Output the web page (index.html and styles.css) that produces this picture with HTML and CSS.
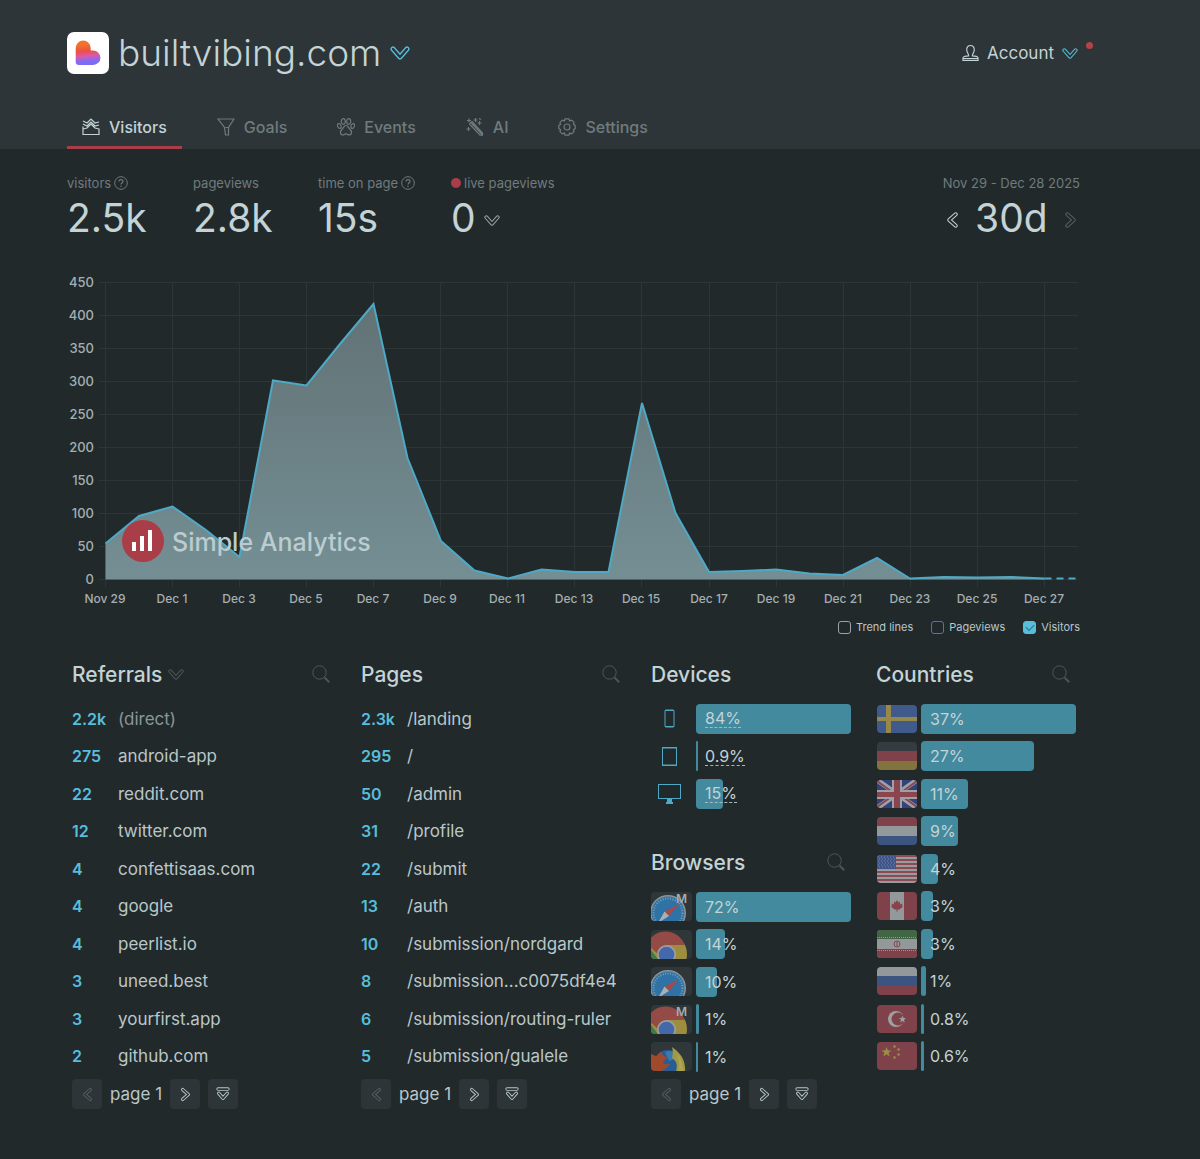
FILE: index.html
```html
<!doctype html>
<html lang="en">
<head>
    <meta charset="UTF-8">
    <meta name="viewport" content="width=device-width, initial-scale=1.0">
    <title>builtvibing.com - Simple Analytics</title>
    <link rel="stylesheet" href="styles.css">
</head>
<body>
    <!-- shared icons -->
    <svg class="sprite" aria-hidden="true">
        <defs>
            <symbol id="down" viewBox="0 0 20 16">
                <path class="outer" d="M3 4l7 8 7-8"/>
                <path class="inner" d="M3 4l7 8 7-8"/>
            </symbol>
            <symbol id="left" viewBox="0 0 16 20">
                <path class="outer" d="M12 3l-8 7 8 7"/>
                <path class="inner" d="M12 3l-8 7 8 7"/>
            </symbol>
            <symbol id="right" viewBox="0 0 16 20">
                <path class="outer" d="M4 3l8 7-8 7"/>
                <path class="inner" d="M4 3l8 7-8 7"/>
            </symbol>
            <symbol id="last" viewBox="0 0 20 20">
                <path class="outer" d="M4 9l6 7 6-7M3 3h14"/>
                <path class="inner" d="M4 9l6 7 6-7M3 3h14"/>
            </symbol>
            <symbol id="search" viewBox="0 0 18 18">
                <circle cx="7.5" cy="7.5" r="6.7" fill="none" stroke="currentColor"/>
                <path d="M12.5 12.5l4.7 4.7" fill="none" stroke="currentColor" stroke-width="2"/>
            </symbol>
            <symbol id="help" viewBox="0 0 14 14">
                <circle cx="7" cy="7" r="6.3" fill="none" stroke="currentColor"/>
                <path d="M5 5.6c0-2.6 4-2.6 4-.2C9 7 7 6.9 7 8.5M7 9.7v1.2" fill="none" stroke="currentColor" stroke-width="1.2"/>
            </symbol>
            <symbol id="safari" viewBox="0 0 41 29">
                <circle cx="17" cy="21" r="18" fill="#8c9496"/>
                <circle cx="17" cy="21" r="16.5" fill="#2f72a5"/>
                <circle cx="17" cy="21" r="14.5" fill="none" stroke="#7b9db4" stroke-width="2" stroke-dasharray="1 1.5"/>
                <path d="M28 12L13.5 19.5l4.5 4.5z" fill="#a44a4b"/>
                <path d="M7 31l6.5-11.5 4.5 4.5z" fill="#a9b0b1"/>
            </symbol>
            <symbol id="chrome" viewBox="0 0 41 29">
                <circle cx="16" cy="24" r="20" fill="#9d8e3f"/>
                <path d="M-4 14a20 20 0 0 1 37.500 1H16L7 24z" fill="#944a45"/>
                <path d="M-3 16L9 32H-4z" fill="#3b7a4b"/>
                <circle cx="15.5" cy="24.5" r="9.5" fill="#9a9f9f"/>
                <circle cx="15.5" cy="24.5" r="7.8" fill="#4468aa"/>
            </symbol>
            <symbol id="firefox" viewBox="0 0 41 29">
                <circle cx="17" cy="23" r="15" fill="#285c94"/>
                <path d="M14 10c6-3 11 1 12 6l-8 3z" fill="#3979ab"/>
                <path d="M21 5c9 6 14 14 13 25h-9c2-9 0-11-4-14 1-4 1-7 0-11z" fill="#a19a43"/>
                <path d="M26 12c5 5 6 12 6 18h-5c2-8 1-12-1-18z" fill="#a9a553"/>
                <path d="M0 12c3 1 4 2 6 2 1-2 3-4 5-4 0 3 1 4 5 5-1 3-4 4-4 6 2 2 5 1 7 1-2 4-6 5-8 7H0z" fill="#a04a2d"/>
            </symbol>
        </defs>
    </svg>

    <header class="header">
        <div class="top">
            <button class="site">
                <svg class="logo" viewBox="0 0 42 42">
                    <defs>
                        <linearGradient id="heart" x1="0.4" y1="0" x2="0.5" y2="1">
                            <stop offset="0.15" stop-color="#f3732a"/>
                            <stop offset="0.42" stop-color="#ec5044"/>
                            <stop offset="0.64" stop-color="#d75ab0"/>
                            <stop offset="0.85" stop-color="#7d6cf5"/>
                        </linearGradient>
                    </defs>
                    <rect width="42" height="42" rx="7" fill="#fff"/>
                    <path fill="url(#heart)" d="M8.7 16a7.5 7.5 0 0 1 15 0v2.5h2.5a7.2 7.2 0 0 1 0 14.500H12a3.3 3.3 0 0 1-3.3-3.3z"/>
                </svg>
                <span class="site-name">builtvibing.com</span>
                <svg class="icon-down blue"><use href="#down"/></svg>
            </button>
            <button class="account">
                <svg class="user" viewBox="0 0 18 18">
                    <path d="M9 1C6.5 1 5 3 5 5.5c0 3 2 4 2 6.5-4 0-6 1-6 2.5V17h16v-2.5C17 13 15 12 11 12c0-2.5 2-3.5 2-6.5C13 3 11.5 1 9 1zM1 15h16"/>
                </svg>
                Account
                <svg class="icon-down small blue"><use href="#down"/></svg>
                <span class="badge"></span>
            </button>
        </div>
        <nav class="tabs">
            <a href="#" class="tab active">
                <svg class="tab-icon" viewBox="0 0 18 18"><path d="M1 8.500v8h16v-6M1 3l4 2 4-4 4 4 4-1M1 6l4 2 4-4 4 4 4-1M1 11l4-1 4-4 4 4 4 1"/></svg>
                Visitors
            </a>
            <a href="#" class="tab">
                <svg class="tab-icon" viewBox="0 0 18 18"><path d="M1 1h16l-5.500 8.500V17h-3l-1-7.500zM8.500 9.500h3"/></svg>
                Goals
            </a>
            <a href="#" class="tab">
                <svg class="tab-icon" viewBox="0 0 18 18">
                    <ellipse cx="6.3" cy="3.5" rx="2" ry="2.8"/>
                    <ellipse cx="11.7" cy="3.5" rx="2" ry="2.8"/>
                    <ellipse cx="2.3" cy="8" rx="1.7" ry="2.5" transform="rotate(-20 2.3 8)"/>
                    <ellipse cx="15.7" cy="8" rx="1.7" ry="2.5" transform="rotate(20 15.7 8)"/>
                    <path d="M9 7.5c-2 0-2 2-3.500 3.200C4 12 3 13 3.500 15c.5 2 2.500 2.500 3.800 1.500 1-.7 2.400-.7 3.400 0 1.300 1 3.300.5 3.800-1.500.5-2-.5-3-2-4.300C11 9.500 11 7.500 9 7.500z"/>
                </svg>
                Events
            </a>
            <a href="#" class="tab">
                <svg class="tab-icon" viewBox="0 0 18 18">
                    <path d="M5 4.5L16.500 17M3.500 6L14 17.200h2.500V15L6 3.500M3.500 6L6 3.500M6.500 7.500l2-1.500"/>
                    <path d="M3 .5v4M1 2.500h4M9.500 0v4M7.500 2h4M13.500 3v4M11.500 5h4M2.500 9v4M.5 11h4M13 .5l2 1"/>
                </svg>
                AI
            </a>
            <a href="#" class="tab">
                <svg class="tab-icon" viewBox="0 0 18 18">
                    <circle cx="9" cy="9" r="3"/>
                    <path d="M7 .8h4l.6 2.100 2.100-.8 2.300 2.300-.5 2.100 1.700.9v3.200l-1.700.9.5 2.100-2.300 2.300-2.100-.8-.6 2.100H7l-.6-2.100-2.100.8L2 13.600l.5-2.100-1.700-.9V7.400l1.700-.9L2 4.400l2.300-2.300 2.100.8z"/>
                </svg>
                Settings
            </a>
        </nav>
    </header>

    <main class="content">
        <section class="stats">
            <div class="stat">
                <div class="label">visitors <svg class="help"><use href="#help"/></svg></div>
                <div class="value">2.5k</div>
            </div>
            <div class="stat">
                <div class="label">pageviews</div>
                <div class="value">2.8k</div>
            </div>
            <div class="stat">
                <div class="label">time on page <svg class="help"><use href="#help"/></svg></div>
                <div class="value">15s</div>
            </div>
            <div class="stat">
                <div class="label"><span class="live-dot"></span>live pageviews</div>
                <div class="value">0 <svg class="icon-down small"><use href="#down"/></svg></div>
            </div>
            <div class="stat period">
                <div class="label">Nov 29 - Dec 28 2025</div>
                <div class="value">
                    <button aria-label="Previous period"><svg class="arrow"><use href="#left"/></svg></button>
                    30d
                    <button class="dim" aria-label="Next period"><svg class="arrow"><use href="#right"/></svg></button>
                </div>
            </div>
        </section>

        <svg class="chart" viewBox="0 0 1013 340">
            <defs>
                <linearGradient id="area" x1="0" y1="0" x2="0" y2="1">
                    <stop offset="0" stop-color="#627275"/>
                    <stop offset="1" stop-color="#748f94"/>
                </linearGradient>
            </defs>
            <g class="grid">
                <path d="M32 12.5h979M32 45.5h979M32 78.5h979M32 111.5h979M32 144.5h979M32 177.5h979M32 210.5h979M32 243.5h979M32 276.5h979M32 309.5h979"/>
                <path d="M38.5 12v305M105.5 12v305M172.5 12v305M239.5 12v305M306.5 12v305M373.5 12v305M440.5 12v305M507.5 12v305M574.5 12v305M642.5 12v305M709.5 12v305M776.5 12v305M843.5 12v305M910.5 12v305M977.5 12v305"/>
            </g>
            <path fill="url(#area)" d="M38.5 309.5V273.5L72 246l33.5-9.5L139 260l33.5 27L206 110.5l33.5 5L273 74l33.5-40L340.5 188l33.5 83 33.5 29.5L441 308.5l33.5-9L508 302h33.5L575 133l33.5 110 33.5 59 33.5-1 33.5-1.5 33.5 4 33.5 1.5 34-17 33 20.5 34-1.5 33.5.5 33.5-.5 33.5 1.5v1z"/>
            <path class="line" d="M38.5 273.5L72 246l33.5-9.5L139 260l33.5 27L206 110.5l33.5 5L273 74l33.5-40L340.5 188l33.5 83 33.5 29.5L441 308.5l33.5-9L508 302h33.5L575 133l33.5 110 33.5 59 33.5-1 33.5-1.5 33.5 4 33.5 1.5 34-17 33 20.5 34-1.5 33.5.5 33.5-.5 33.5 1.5"/>
            <path class="line dashed" d="M977.5 308.5h33"/>
            <g class="axis y-axis">
                <text x="27" y="17">450</text>
                <text x="27" y="50">400</text>
                <text x="27" y="83">350</text>
                <text x="27" y="116">300</text>
                <text x="27" y="149">250</text>
                <text x="27" y="182">200</text>
                <text x="27" y="215">150</text>
                <text x="27" y="248">100</text>
                <text x="27" y="281">50</text>
                <text x="27" y="314">0</text>
            </g>
            <g class="axis x-axis">
                <text x="38" y="333">Nov 29</text>
                <text x="105" y="333">Dec 1</text>
                <text x="172" y="333">Dec 3</text>
                <text x="239" y="333">Dec 5</text>
                <text x="306" y="333">Dec 7</text>
                <text x="373" y="333">Dec 9</text>
                <text x="440" y="333">Dec 11</text>
                <text x="507" y="333">Dec 13</text>
                <text x="574" y="333">Dec 15</text>
                <text x="642" y="333">Dec 17</text>
                <text x="709" y="333">Dec 19</text>
                <text x="776" y="333">Dec 21</text>
                <text x="843" y="333">Dec 23</text>
                <text x="910" y="333">Dec 25</text>
                <text x="977" y="333">Dec 27</text>
            </g>
            <circle cx="76" cy="271" r="21" fill="#a93e48"/>
            <path d="M67 272v9M75 266v15M83 260v21" stroke="#fff" stroke-width="4"/>
            <text class="watermark" x="105" y="281">Simple Analytics</text>
        </svg>

        <form class="legend">
            <label><input type="checkbox" class="check"> Trend lines</label>
            <label><input type="checkbox" class="check violet"> Pageviews</label>
            <label><input type="checkbox" class="check" checked> Visitors</label>
        </form>

        <div class="panels">
            <section class="panel">
                <div class="panel-head">
                    <h2>Referrals</h2>
                    <svg class="icon-down small faint"><use href="#down"/></svg>
                    <button class="search" aria-label="Search referrals"><svg><use href="#search"/></svg></button>
                </div>
                <table class="list">
                    <tr><th>2.2k</th><td class="direct">(direct)</td></tr>
                    <tr><th>275</th><td>android-app</td></tr>
                    <tr><th>22</th><td>reddit.com</td></tr>
                    <tr><th>12</th><td>twitter.com</td></tr>
                    <tr><th>4</th><td>confettisaas.com</td></tr>
                    <tr><th>4</th><td>google</td></tr>
                    <tr><th>4</th><td>peerlist.io</td></tr>
                    <tr><th>3</th><td>uneed.best</td></tr>
                    <tr><th>3</th><td>yourfirst.app</td></tr>
                    <tr><th>2</th><td>github.com</td></tr>
                </table>
                <div class="pager">
                    <button class="dim" aria-label="Previous page"><svg class="arrow"><use href="#left"/></svg></button>
                    <span>page 1</span>
                    <button aria-label="Next page"><svg class="arrow"><use href="#right"/></svg></button>
                    <button aria-label="Show all"><svg class="last"><use href="#last"/></svg></button>
                </div>
            </section>

            <section class="panel">
                <div class="panel-head">
                    <h2>Pages</h2>
                    <button class="search" aria-label="Search pages"><svg><use href="#search"/></svg></button>
                </div>
                <table class="list">
                    <tr><th>2.3k</th><td>/landing</td></tr>
                    <tr><th>295</th><td>/</td></tr>
                    <tr><th>50</th><td>/admin</td></tr>
                    <tr><th>31</th><td>/profile</td></tr>
                    <tr><th>22</th><td>/submit</td></tr>
                    <tr><th>13</th><td>/auth</td></tr>
                    <tr><th>10</th><td>/submission/nordgard</td></tr>
                    <tr><th>8</th><td>/submission...c0075df4e4</td></tr>
                    <tr><th>6</th><td>/submission/routing-ruler</td></tr>
                    <tr><th>5</th><td>/submission/gualele</td></tr>
                </table>
                <div class="pager">
                    <button class="dim" aria-label="Previous page"><svg class="arrow"><use href="#left"/></svg></button>
                    <span>page 1</span>
                    <button aria-label="Next page"><svg class="arrow"><use href="#right"/></svg></button>
                    <button aria-label="Show all"><svg class="last"><use href="#last"/></svg></button>
                </div>
            </section>

            <section class="panel">
                <div class="panel-head">
                    <h2>Devices</h2>
                </div>
                <table class="bars devices">
                    <tr>
                        <th><svg class="device" viewBox="0 0 37 29"><rect x="14" y="6" width="9" height="17" rx="1"/><path d="M14 6.500h9M14 22.500h9"/></svg></th>
                        <td><div class="bar"><div class="fill" style="width: 100%"></div><span>84%</span></div></td>
                    </tr>
                    <tr>
                        <th><svg class="device" viewBox="0 0 37 29"><rect x="11.5" y="5.5" width="14" height="18"/><path d="M11 6h15M11 23h15"/></svg></th>
                        <td><div class="bar"><div class="fill" style="width: 1%"></div><span>0.9%</span></div></td>
                    </tr>
                    <tr>
                        <th><svg class="device" viewBox="0 0 37 29"><rect x="7.5" y="5.5" width="22" height="14"/><path d="M7 19.500h23"/><path class="solid" d="M16 20h5v3h1v2h-7v-2h1z"/></svg></th>
                        <td><div class="bar"><div class="fill" style="width: 17.5%"></div><span>15%</span></div></td>
                    </tr>
                </table>

                <div class="panel-head browsers-head">
                    <h2>Browsers</h2>
                    <button class="search" aria-label="Search browsers"><svg><use href="#search"/></svg></button>
                </div>
                <table class="bars">
                    <tr>
                        <th><svg class="tile" viewBox="0 0 41 29"><use href="#safari"/><text x="25" y="11">M</text></svg></th>
                        <td><div class="bar"><div class="fill" style="width: 100%"></div><span>72%</span></div></td>
                    </tr>
                    <tr>
                        <th><svg class="tile" viewBox="0 0 41 29"><use href="#chrome"/></svg></th>
                        <td><div class="bar"><div class="fill" style="width: 19%"></div><span>14%</span></div></td>
                    </tr>
                    <tr>
                        <th><svg class="tile" viewBox="0 0 41 29"><use href="#safari"/></svg></th>
                        <td><div class="bar"><div class="fill" style="width: 13.5%"></div><span>10%</span></div></td>
                    </tr>
                    <tr>
                        <th><svg class="tile" viewBox="0 0 41 29"><use href="#chrome"/><text x="25" y="11">M</text></svg></th>
                        <td><div class="bar"><div class="fill" style="width: 2%"></div><span>1%</span></div></td>
                    </tr>
                    <tr>
                        <th><svg class="tile" viewBox="0 0 41 29"><use href="#firefox"/></svg></th>
                        <td><div class="bar"><div class="fill" style="width: 1%"></div><span>1%</span></div></td>
                    </tr>
                </table>
                <div class="pager">
                    <button class="dim" aria-label="Previous page"><svg class="arrow"><use href="#left"/></svg></button>
                    <span>page 1</span>
                    <button aria-label="Next page"><svg class="arrow"><use href="#right"/></svg></button>
                    <button aria-label="Show all"><svg class="last"><use href="#last"/></svg></button>
                </div>
            </section>

            <section class="panel">
                <div class="panel-head">
                    <h2>Countries</h2>
                    <button class="search" aria-label="Search countries"><svg><use href="#search"/></svg></button>
                </div>
                <table class="bars countries">
                    <tr>
                        <th><svg class="flag" viewBox="0 0 40 28"><path fill="#405a8c" d="M0 0h40v28H0z"/><path fill="#97884a" d="M9 0h5v28H9zM0 12h40v4H0z"/></svg></th>
                        <td><div class="bar"><div class="fill" style="width: 100%"></div><span>37%</span></div></td>
                    </tr>
                    <tr>
                        <th><svg class="flag" viewBox="0 0 40 28"><path fill="#353b41" d="M0 0h40v10H0z"/><path fill="#7f424a" d="M0 9h40v10H0z"/><path fill="#83743d" d="M0 19h40v9H0z"/></svg></th>
                        <td><div class="bar"><div class="fill" style="width: 73%"></div><span>27%</span></div></td>
                    </tr>
                    <tr>
                        <th>
                            <svg class="flag" viewBox="0 0 40 28">
                                <path fill="#34427b" d="M0 0h40v28H0z"/>
                                <path stroke="#9da1a5" stroke-width="5" d="M0 0l40 28M40 0L0 28"/>
                                <path stroke="#8b454f" stroke-width="2" d="M0 1l18 13M40 1L22 14M0 27l18-13M40 27L22 14"/>
                                <path fill="#9da1a5" d="M15 0h10v28H15zM0 10h40v9H0z"/>
                                <path fill="#8b454f" d="M17 0h6v28h-6zM0 12h40v5H0z"/>
                            </svg>
                        </th>
                        <td><div class="bar"><div class="fill" style="width: 30%"></div><span>11%</span></div></td>
                    </tr>
                    <tr>
                        <th><svg class="flag" viewBox="0 0 40 28"><path fill="#7f424a" d="M0 0h40v10H0z"/><path fill="#93989a" d="M0 9h40v10H0z"/><path fill="#3c5580" d="M0 19h40v9H0z"/></svg></th>
                        <td><div class="bar"><div class="fill" style="width: 24%"></div><span>9%</span></div></td>
                    </tr>
                    <tr>
                        <th>
                            <svg class="flag" viewBox="0 0 40 28">
                                <path fill="#989c9f" d="M0 0h40v28H0z"/>
                                <path stroke="#8b4a54" stroke-width="2" d="M0 1h40M0 5h40M0 9h40M0 13h40M0 17h40M0 21h40M0 25h40"/>
                                <path fill="#40558a" d="M0 0h19v14H0z"/>
                                <path stroke="#7584a6" stroke-dasharray="1 2" d="M1 2h17M2 4h16M1 6h17M2 8h16M1 10h17M2 12h16"/>
                            </svg>
                        </th>
                        <td><div class="bar"><div class="fill" style="width: 11%"></div><span>4%</span></div></td>
                    </tr>
                    <tr>
                        <th><svg class="flag" viewBox="0 0 40 28"><path fill="#7f424a" d="M0 0h40v28H0z"/><path fill="#93989a" d="M13 0h14v28H13z"/><path fill="#87424b" d="M20 8l1.500 2.500 1.500-1v3l2.500-1-.5 2 1 1-3.500 3h-2v2h-1v-2h-2L14 14.500l1-1-.5-2 2.500 1v-3l1.500 1z"/></svg></th>
                        <td><div class="bar"><div class="fill" style="width: 8%"></div><span>3%</span></div></td>
                    </tr>
                    <tr>
                        <th>
                            <svg class="flag" viewBox="0 0 40 28">
                                <path fill="#93989a" d="M0 0h40v28H0z"/><path fill="#426544" d="M0 0h40v9H0z"/><path fill="#7f424a" d="M0 19h40v9H0z"/>
                                <path stroke="#93989a" stroke-dasharray="1 1" d="M0 7.500h40M0 20.500h40"/>
                                <circle cx="20" cy="14" r="3" fill="none" stroke="#87424b"/><path stroke="#87424b" d="M20 12v4"/>
                            </svg>
                        </th>
                        <td><div class="bar"><div class="fill" style="width: 8%"></div><span>3%</span></div></td>
                    </tr>
                    <tr>
                        <th><svg class="flag" viewBox="0 0 40 28"><path fill="#93989a" d="M0 0h40v10H0z"/><path fill="#3c5580" d="M0 9h40v10H0z"/><path fill="#7f424a" d="M0 19h40v9H0z"/></svg></th>
                        <td><div class="bar"><div class="fill" style="width: 3%"></div><span>1%</span></div></td>
                    </tr>
                    <tr>
                        <th><svg class="flag" viewBox="0 0 40 28"><path fill="#7f424a" d="M0 0h40v28H0z"/><circle cx="19" cy="14" r="8" fill="#9da1a1"/><circle cx="21" cy="14" r="6.5" fill="#7f424a"/><path fill="#9da1a1" d="M25.500 10.500l1 2.500h2.500l-2 1.800.8 2.700-2.300-1.500-2.300 1.500.8-2.700-2-1.800h2.500z"/></svg></th>
                        <td><div class="bar"><div class="fill" style="width: 2%"></div><span>0.8%</span></div></td>
                    </tr>
                    <tr>
                        <th><svg class="flag" viewBox="0 0 40 28"><path fill="#7f424a" d="M0 0h40v28H0z"/><path fill="#9a8f44" d="M9.500 5l1.400 3.500h3.600l-2.900 2.300 1.100 3.700-3.200-2.200-3.200 2.200 1.100-3.700-2.900-2.300h3.600z"/><path stroke="#9a8f44" stroke-width="2.5" stroke-linecap="round" d="M17.500 4.500h.1M21.500 7.500h.1M21.500 12.500h.1M17.500 15.500h.1"/></svg></th>
                        <td><div class="bar"><div class="fill" style="width: 2%"></div><span>0.6%</span></div></td>
                    </tr>
                </table>
            </section>
        </div>
    </main>
</body>
</html>
```

FILE: styles.css
```css
* {
    box-sizing: border-box;
}

body {
    --back: #22292b;
    margin: 0;
    font-family: Inter, "Noto Sans", sans-serif;
    font-size: 16px;
    background-color: #22292b;
    color: #b9c7c9;
}

button {
    padding: 0;
    border: none;
    background: none;
    color: inherit;
    font: inherit;
    cursor: pointer;
}

svg {
    display: block;
    flex: none;
}

.sprite {
    position: absolute;
    width: 0;
    height: 0;
}

/* hollow arrows: wide stroke with the background stroked on top */
.outer, .inner {
    fill: none;
    stroke: currentColor;
    stroke-width: 5;
    stroke-linecap: round;
    stroke-linejoin: round;
}

.inner {
    stroke: var(--back);
    stroke-width: 2.4;
}

.icon-down {
    width: 20px;
    height: 16px;
}

.icon-down.small {
    width: 16px;
    height: 13px;
}

.arrow {
    width: 13px;
    height: 18px;
}

.blue {
    color: #56bedb;
}

.faint {
    color: #4b5658;
}

.dim {
    color: #566063;
}

/* header */
.header {
    --back: #2d3538;
    padding: 32px 120px 0 67px;
    background-color: #2d3538;
}

.top {
    display: flex;
    justify-content: space-between;
    align-items: center;
    height: 42px;
}

.site {
    display: flex;
    align-items: center;
    gap: 9px;
}

.logo {
    width: 42px;
    height: 42px;
}

.site-name {
    font-size: 37px;
    font-weight: 300;
    line-height: 42px;
    color: #c3d3d6;
}

.account {
    position: relative;
    display: flex;
    align-items: center;
    gap: 8px;
    padding-right: 2px;
    font-size: 17px;
    color: #c3d3d6;
}

.user {
    width: 17px;
    height: 18px;
    fill: none;
    stroke: currentColor;
    stroke-width: 1.2;
}

.badge {
    position: absolute;
    top: -1px;
    right: -13px;
    width: 7px;
    height: 7px;
    border-radius: 50%;
    background-color: #b0434c;
}

.tabs {
    display: flex;
    gap: 20px;
    margin-top: 34px;
}

.tab {
    display: flex;
    align-items: center;
    gap: 9px;
    height: 41px;
    padding: 0 15px;
    border-bottom: 3px solid transparent;
    font-size: 16px;
    font-weight: 500;
    color: #6f7b7e;
    text-decoration: none;
}

.tab.active {
    border-bottom-color: #a93e48;
    color: #c3d3d6;
}

.tab-icon {
    width: 18px;
    height: 18px;
    fill: none;
    stroke: currentColor;
    stroke-width: 1.2;
}

/* numbers */
.content {
    padding: 24px 120px 48px 67px;
}

.stats {
    display: grid;
    grid-template-columns: 126px 125px 133px auto 1fr;
}

.label {
    display: flex;
    align-items: center;
    gap: 3px;
    height: 20px;
    font-size: 13px;
    color: #6f7b7e;
    white-space: nowrap;
}

.help {
    width: 14px;
    height: 14px;
}

.live-dot {
    width: 10px;
    height: 10px;
    border-radius: 50%;
    background-color: #a93e48;
}

.value {
    display: flex;
    align-items: center;
    gap: 8px;
    height: 48px;
    font-size: 39px;
    color: #c3d3d6;
}

.value svg {
    margin-top: 6px;
}

.value .icon-down {
    color: #97a3a5;
}

.period {
    justify-self: end;
}

.period .value {
    justify-content: space-between;
    padding: 0 3px;
}

/* chart */
.chart {
    width: 100%;
    margin-top: 29px;
}

.grid {
    stroke: #2d3538;
}

.line {
    fill: none;
    stroke: #4da9c5;
    stroke-width: 2;
}

.dashed {
    stroke-dasharray: 7 5;
}

.axis {
    font-size: 13px;
    font-weight: 500;
    fill: #a3b0b2;
}

.y-axis {
    text-anchor: end;
}

.x-axis {
    font-size: 12px;
    text-anchor: middle;
}

.watermark {
    font-size: 25px;
    font-weight: 500;
    fill: #bccdd1;
}

.legend {
    display: flex;
    justify-content: flex-end;
    gap: 18px;
    margin-top: 10px;
    font-size: 11px;
    line-height: 14px;
}

.legend label {
    display: flex;
    align-items: center;
    gap: 5px;
}

.check {
    appearance: none;
    display: grid;
    place-items: center;
    width: 13px;
    height: 13px;
    margin: 0;
    border: 1px solid #99a4a6;
    border-radius: 3px;
}

.check.violet {
    border-color: #5b6fae;
}

.check:checked {
    border-color: #56bedb;
    background-color: #56bedb;
}

.check:checked::after {
    content: "";
    width: 7px;
    height: 4px;
    margin-bottom: 2px;
    border: solid #2d6f83;
    border-width: 0 0 1px 1px;
    transform: rotate(-45deg);
}

/* lists */
.panels {
    display: grid;
    grid-template-columns: 264fr 265fr 200fr 200fr;
    gap: 25px;
    margin-top: 26px;
    padding: 0 4px 0 5px;
}

.panel-head {
    display: flex;
    align-items: center;
    gap: 6px;
    height: 28px;
    padding-right: 6px;
    margin-bottom: 12px;
}

.browsers-head {
    margin-top: 36px;
}

h2 {
    margin: 0;
    font-size: 21px;
    font-weight: 500;
    color: #c3d3d6;
}

.search {
    margin-left: auto;
    color: #4b5658;
}

.search svg {
    width: 18px;
    height: 18px;
}

table {
    width: 100%;
    border-collapse: collapse;
}

th, td {
    padding: 0;
    text-align: left;
}

tr {
    height: 37px;
}

tr:nth-child(even) {
    height: 38px;
}

.list th {
    width: 46px;
    font-weight: 600;
    color: #56bedb;
}

.list td {
    font-size: 17px;
}

.list .direct {
    color: #8a9698;
}

.pager {
    --back: #2d3538;
    display: flex;
    align-items: center;
    gap: 8px;
    margin-top: 4px;
    font-size: 17px;
}

.pager button {
    display: grid;
    place-items: center;
    width: 30px;
    height: 30px;
    border-radius: 4px;
    background-color: #2d3538;
}

.pager .arrow {
    width: 11px;
    height: 15px;
}

.last {
    width: 14px;
    height: 14px;
}

/* bars */
.bars th {
    width: 45px;
}

.bar {
    display: grid;
    align-items: center;
    height: 30px;
}

.fill, .bar span {
    grid-area: 1 / 1;
}

.fill {
    height: 30px;
    border-radius: 4px;
    background-color: #438a9f;
}

.bar span {
    justify-self: start;
    margin-left: 9px;
    color: #c3d3d6;
}

.devices span {
    border-bottom: 1px dashed #a9b8ba;
    line-height: 18px;
}

.device {
    width: 37px;
    height: 29px;
    fill: none;
    stroke: #4da9c5;
}

.device .solid {
    fill: #4da9c5;
    stroke: none;
}

.tile {
    width: 41px;
    height: 29px;
    border-radius: 4px;
    background-color: #2f373a;
}

.tile text {
    font-size: 12px;
    font-weight: 600;
    fill: #a3adaf;
}

.flag {
    width: 40px;
    height: 28px;
    margin-left: 1px;
    border-radius: 4px;
}
```
